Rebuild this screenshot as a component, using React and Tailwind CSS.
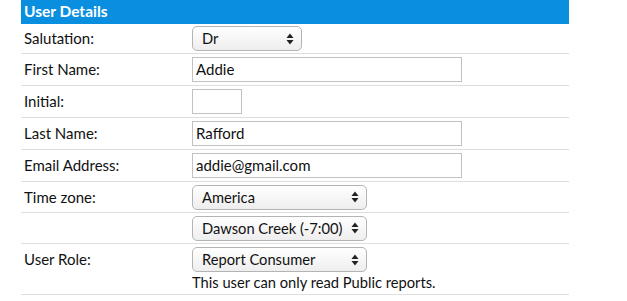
import React from 'react';

const font = { fontFamily: 'Lato, "Open Sans", sans-serif' };

function Arrows() {
  return (
    <svg width="8" height="12" viewBox="0 0 8 12" className="shrink-0">
      <path d="M4 0.5 L7.5 5 L0.5 5 Z" fill="#222" />
      <path d="M4 11.5 L7.5 7 L0.5 7 Z" fill="#222" />
    </svg>
  );
}

function Select({ value, width }) {
  return (
    <div
      className={`flex items-center justify-between h-[25px] ${width} pl-[9px] pr-[7px] rounded-[5px] border border-[#b4b4b4] bg-gradient-to-b from-white to-[#eeeeee] text-[14.7px] text-[#111]`}
    >
      <span>{value}</span>
      <Arrows />
    </div>
  );
}

function Input({ value, width }) {
  return (
    <div className={`flex items-center h-[25px] ${width} px-[3px] border border-[#c2c2c2] bg-white text-[15px] text-[#111]`}>
      {value}
    </div>
  );
}

function Row({ label, h, children, top }) {
  return (
    <div className={`flex ${top ? 'items-start' : 'items-center'} ${h} border-b border-[#dedede]`}>
      <div className={`w-[171px] pl-[3px] text-[15px] text-[#111] ${top ? 'pt-[1px]' : ''}`}>{label}</div>
      <div className="flex-1">{children}</div>
    </div>
  );
}

export default function App() {
  return (
    <div className="w-[627px] h-[301px] bg-white" style={font}>
      <div className="ml-[21px] w-[548px]">
        <div className="h-[24px] bg-[#0a8fe0] text-white font-bold text-[15.5px] pl-[3px] flex items-center">
          User Details
        </div>
        <Row label="Salutation:" h="h-[30px]">
          <Select value="Dr" width="w-[110px]" />
        </Row>
        <Row label="First Name:" h="h-[32px]">
          <Input value="Addie" width="w-[270px]" />
        </Row>
        <Row label="Initial:" h="h-[32px]">
          <Input value="" width="w-[50px]" />
        </Row>
        <Row label="Last Name:" h="h-[32px]">
          <Input value="Rafford" width="w-[270px]" />
        </Row>
        <Row label="Email Address:" h="h-[32px]">
          <Input value="addie@gmail.com" width="w-[270px]" />
        </Row>
        <Row label="Time zone:" h="h-[31px]">
          <Select value="America" width="w-[175px]" />
        </Row>
        <Row label="" h="h-[31px]">
          <Select value="Dawson Creek (-7:00)" width="w-[175px]" />
        </Row>
        <Row label="User Role:" h="h-[51px] pt-[3px]" top>
          <Select value="Report Consumer" width="w-[175px]" />
          <div className="text-[14.7px] text-[#111] leading-[18px] mt-[1px]">This user can only read Public reports.</div>
        </Row>
      </div>
    </div>
  );
}
